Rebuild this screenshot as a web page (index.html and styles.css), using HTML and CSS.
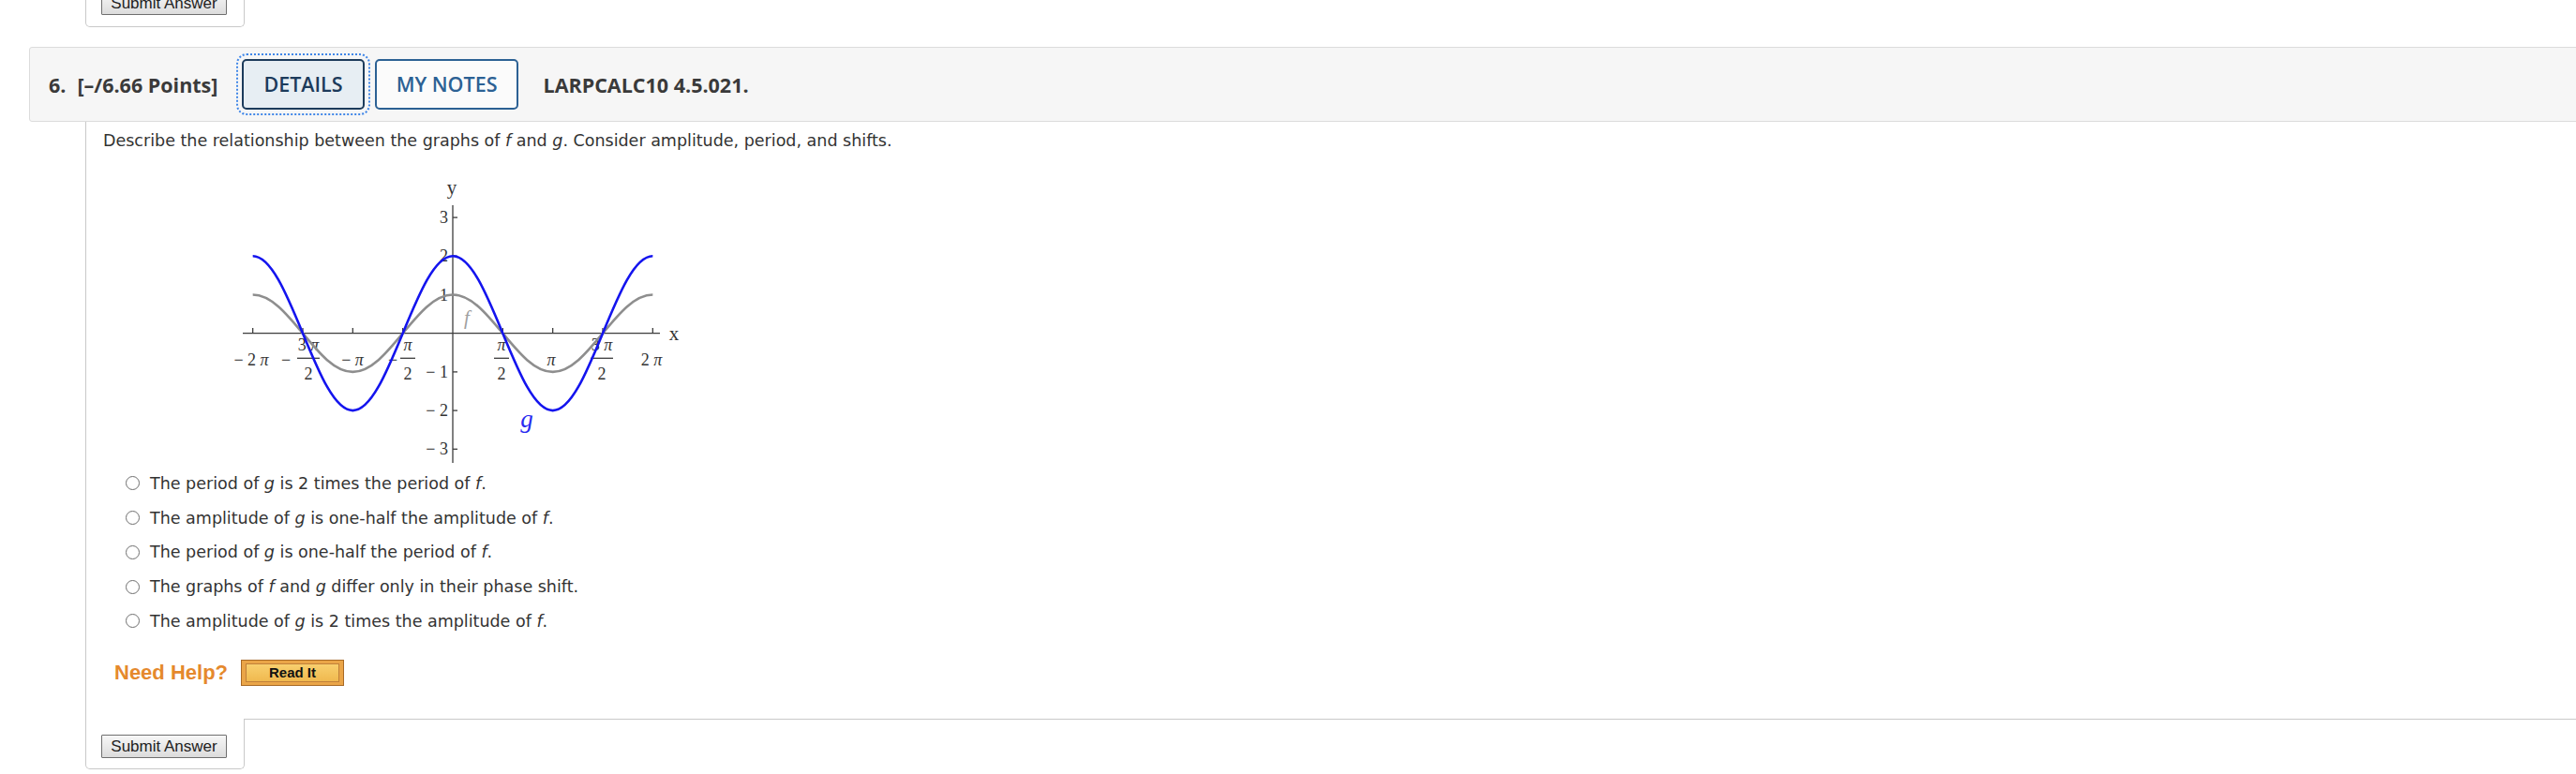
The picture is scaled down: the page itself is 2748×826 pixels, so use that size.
FILE: index.html
```html
<!DOCTYPE html>
<html>
<head>
<meta charset="utf-8">
<title>Question 6</title>
<link rel="stylesheet" href="styles.css">
</head>
<body>
<div class="submit-box prev">
  <button class="btn-submit">Submit Answer</button>
</div>

<div class="q-head">
  <span class="q-num">6.</span>
  <span class="q-points">[–/6.66 Points]</span>
  <button class="btn-tab btn-details">DETAILS</button>
  <button class="btn-tab btn-notes">MY NOTES</button>
  <span class="q-ref">LARPCALC10 4.5.021.</span>
</div>

<div class="q-body">
  <p class="q-text">Describe the relationship between the graphs of <i>f</i> and <i>g</i>. Consider amplitude, period, and shifts.</p>

  <svg class="graph" width="520" height="324" viewBox="0 0 520 324">
    <g class="axis">
      <line x1="39" y1="185.7" x2="484" y2="185.7"/>
      <line x1="263" y1="49" x2="263" y2="324"/>
      <line x1="49.67" y1="185.7" x2="49.67" y2="180"/>
      <line x1="103" y1="185.7" x2="103" y2="180"/>
      <line x1="156.33" y1="185.7" x2="156.33" y2="180"/>
      <line x1="209.67" y1="185.7" x2="209.67" y2="180"/>
      <line x1="316.33" y1="185.7" x2="316.33" y2="180"/>
      <line x1="369.67" y1="185.7" x2="369.67" y2="180"/>
      <line x1="423" y1="185.7" x2="423" y2="180"/>
      <line x1="476.33" y1="185.7" x2="476.33" y2="180"/>
      <line x1="263" y1="62.1" x2="268" y2="62.1"/>
      <line x1="263" y1="103.3" x2="268" y2="103.3"/>
      <line x1="263" y1="144.5" x2="268" y2="144.5"/>
      <line x1="263" y1="226.9" x2="268" y2="226.9"/>
      <line x1="263" y1="268.1" x2="268" y2="268.1"/>
      <line x1="263" y1="309.3" x2="268" y2="309.3"/>
      <line x1="97" y1="212.3" x2="121" y2="212.3"/>
      <line x1="207" y1="212.3" x2="223" y2="212.3"/>
      <line x1="307" y1="212.3" x2="323" y2="212.3"/>
      <line x1="410" y1="212.3" x2="434" y2="212.3"/>
    </g>
    <g class="lbl">
      <text class="axis-name" x="262" y="37" text-anchor="middle">y</text>
      <text class="axis-name" x="499" y="193" text-anchor="middle">x</text>
      <text x="258" y="68" text-anchor="end">3</text>
      <text x="258" y="109" text-anchor="end">2</text>
      <text x="258" y="150.5" text-anchor="end">1</text>
      <text x="258" y="233" text-anchor="end">− 1</text>
      <text x="258" y="274" text-anchor="end">− 2</text>
      <text x="258" y="315" text-anchor="end">− 3</text>
      <text x="48" y="220" text-anchor="middle">− 2 <tspan class="pi">π</tspan></text>
      <text x="85" y="220" text-anchor="middle">−</text>
      <text x="109" y="204" text-anchor="middle">3 <tspan class="pi">π</tspan></text>
      <text x="109" y="235" text-anchor="middle">2</text>
      <text x="156" y="220" text-anchor="middle">− <tspan class="pi">π</tspan></text>
      <text x="199" y="220" text-anchor="middle">−</text>
      <text x="215" y="204" text-anchor="middle" class="pi">π</text>
      <text x="215" y="235" text-anchor="middle">2</text>
      <text x="315" y="204" text-anchor="middle" class="pi">π</text>
      <text x="315" y="235" text-anchor="middle">2</text>
      <text x="368" y="220" text-anchor="middle" class="pi">π</text>
      <text x="422" y="204" text-anchor="middle">3 <tspan class="pi">π</tspan></text>
      <text x="422" y="235" text-anchor="middle">2</text>
      <text x="475" y="220" text-anchor="middle">2 <tspan class="pi">π</tspan></text>
    </g>
    <path class="curve-f" d="M49.67,144.5 C68.97,144.5 85.61,164.59 103,185.7 C120.39,206.81 137.03,226.9 156.33,226.9 C175.63,226.9 192.27,206.81 209.67,185.7 C227.06,164.59 243.7,144.5 263,144.5 C282.3,144.5 298.94,164.59 316.33,185.7 C333.72,206.81 350.36,226.9 369.67,226.9 C388.97,226.9 405.61,206.81 423,185.7 C440.39,164.59 457.03,144.5 476.33,144.5"/>
    <path class="curve-g" d="M49.67,103.3 C68.97,103.3 85.61,143.49 103,185.7 C120.39,227.91 137.03,268.1 156.33,268.1 C175.63,268.1 192.27,227.91 209.67,185.7 C227.06,143.49 243.7,103.3 263,103.3 C282.3,103.3 298.94,143.49 316.33,185.7 C333.72,227.91 350.36,268.1 369.67,268.1 C388.97,268.1 405.61,227.91 423,185.7 C440.39,143.49 457.03,103.3 476.33,103.3"/>
    <text class="name-f" x="278" y="176" text-anchor="middle">f</text>
    <text class="name-g" x="342" y="286" text-anchor="middle">g</text>
  </svg>

  <ul class="choices">
    <li><span class="radio"></span><span>The period of <i>g</i> is 2 times the period of <i>f</i>.</span></li>
    <li><span class="radio"></span><span>The amplitude of <i>g</i> is one-half the amplitude of <i>f</i>.</span></li>
    <li><span class="radio"></span><span>The period of <i>g</i> is one-half the period of <i>f</i>.</span></li>
    <li><span class="radio"></span><span>The graphs of <i>f</i> and <i>g</i> differ only in their phase shift.</span></li>
    <li><span class="radio"></span><span>The amplitude of <i>g</i> is 2 times the amplitude of <i>f</i>.</span></li>
  </ul>

  <div class="help">
    <span class="help-label">Need Help?</span>
    <button class="btn-read"><span class="btn-read-inner">Read It</span></button>
  </div>
</div>

<div class="submit-box">
  <button class="btn-submit">Submit Answer</button>
</div>
</body>
</html>
```

FILE: styles.css
```css
html, body {
  margin: 0;
  padding: 0;
  background: #ffffff;
}

body {
  overflow: hidden;
  font-family: "DejaVu Sans", Verdana, sans-serif;
  color: #333333;
}

/* Submit answer tab box */
.submit-box {
  box-sizing: border-box;
  width: 170px;
  margin-left: 91px;
  margin-top: -1px;
  padding: 17px 0 11px 16px;
  border: 1px solid #c9c9c9;
  border-top: none;
  border-radius: 0 0 5px 5px;
  background: #ffffff;
}

.submit-box.prev {
  margin-top: 0;
  padding-top: 0;
  padding-bottom: 12px;
}

.submit-box.prev .btn-submit {
  margin-top: -9px;
}

.btn-submit {
  display: block;
  box-sizing: border-box;
  width: 134px;
  height: 25px;
  padding: 0;
  border: 1px solid #6f6f6f;
  border-radius: 1px;
  background: linear-gradient(#f7f7f7, #dcdcdc);
  font-family: "Liberation Sans", Arial, sans-serif;
  font-size: 17px;
  color: #222222;
  line-height: 23px;
}

/* Question header */
.q-head {
  box-sizing: border-box;
  height: 80px;
  margin: 21px -20px 0 31px;
  padding-left: 20px;
  display: flex;
  align-items: center;
  background: #f6f6f6;
  border: 1px solid #dcdcdc;
  border-radius: 3px;
  font-family: "Open Sans", sans-serif;
  font-size: 21.5px;
  font-weight: 700;
  color: #3a3a3a;
}

.q-num {
  margin-right: 12px;
}

.q-points {
  margin-right: 26px;
}

.btn-tab {
  box-sizing: border-box;
  height: 54px;
  padding: 0 21px;
  border: 2px solid;
  border-radius: 5px;
  font-family: "Open Sans", sans-serif;
  font-size: 21.5px;
  font-weight: 600;
  line-height: 1;
}

.btn-details {
  background: #e7eef3;
  border-color: #1c3b5b;
  color: #1c3b5b;
  outline: 2px dotted #3f86e8;
  outline-offset: 4px;
}

.btn-notes {
  margin-left: 11px;
  background: #fbfbfb;
  border-color: #2c6194;
  color: #2c6194;
}

.q-ref {
  margin-left: 26px;
}

/* Question body */
.q-body {
  margin-left: 91px;
  padding: 10px 0 35px 18px;
  border-left: 1px solid #c9c9c9;
  border-bottom: 1px solid #c9c9c9;
}

.q-text {
  margin: 0;
  font-size: 17.5px;
  line-height: 21px;
}

.graph {
  display: block;
  margin: 9px 0 0 110px;
}

.axis line {
  stroke: #3c3c3c;
  stroke-width: 1.3;
}

.lbl text {
  font-family: "Liberation Serif", "Times New Roman", serif;
  font-size: 18px;
  fill: #333333;
}

.lbl .pi {
  font-style: italic;
}

.lbl .axis-name {
  font-size: 21px;
}

.curve-f {
  fill: none;
  stroke: #8e8e8e;
  stroke-width: 2.6;
}

.curve-g {
  fill: none;
  stroke: #1414ee;
  stroke-width: 2.6;
}

.name-f {
  font-family: "Liberation Serif", serif;
  font-style: italic;
  font-size: 21px;
  fill: #a0a0a0;
}

.name-g {
  font-family: "Liberation Serif", serif;
  font-style: italic;
  font-size: 27px;
  fill: #2a2af0;
}

/* Choices */
.choices {
  list-style: none;
  margin: 3.6px 0 0 0;
  padding: 0;
}

.choices li {
  height: 36.7px;
  display: flex;
  align-items: center;
  padding-left: 24px;
  font-size: 17.5px;
}

.radio {
  box-sizing: border-box;
  width: 15px;
  height: 15px;
  margin-right: 11px;
  border: 1px solid #6e6e6e;
  border-radius: 50%;
  background: #ffffff;
  flex: none;
}

/* Help */
.help {
  margin-top: 22.8px;
  padding-left: 12px;
  display: flex;
  align-items: center;
  height: 28px;
}

.help-label {
  font-family: "Liberation Sans", Arial, sans-serif;
  font-weight: 700;
  font-size: 22px;
  color: #e5892d;
}

.btn-read {
  box-sizing: border-box;
  width: 110px;
  height: 28px;
  margin-left: 14px;
  padding: 3px 4px;
  display: flex;
  border: 1px solid #a86a26;
  border-radius: 0;
  background: #eaa548;
}

.btn-read-inner {
  flex: 1;
  box-sizing: border-box;
  height: 20px;
  border: 1px solid #c0803a;
  background: linear-gradient(#f8cf6e, #f0b94f);
  font-family: "Liberation Sans", Arial, sans-serif;
  font-weight: 700;
  font-size: 15px;
  line-height: 18px;
  color: #111111;
  text-align: center;
}
```
